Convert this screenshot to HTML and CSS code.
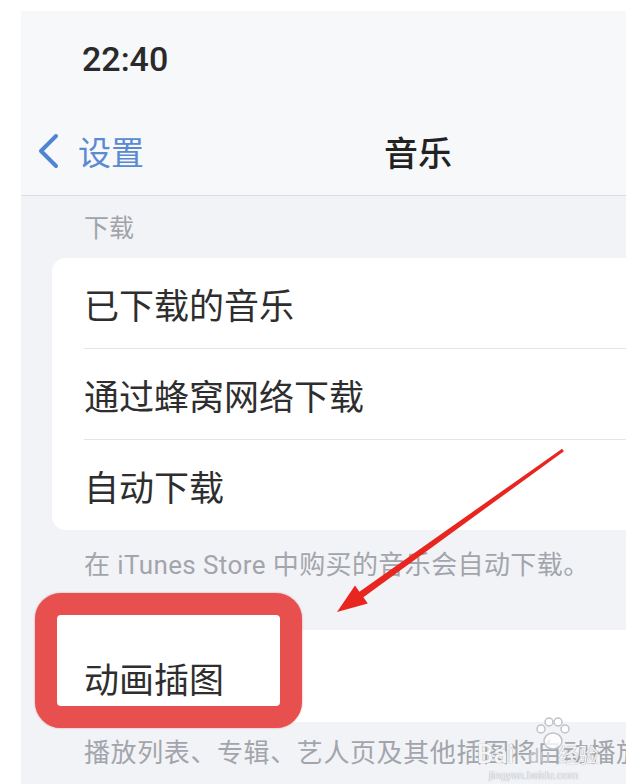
FILE: index.html
```html
<!DOCTYPE html>
<html lang="zh-CN">
<head>
    <meta charset="UTF-8">
    <meta name="viewport" content="width=device-width, initial-scale=1.0">
    <title>音乐</title>
    <link rel="stylesheet" href="styles.css">
</head>
<body>
    <div class="screen">

        <div class="status">
            <span class="time">22:40</span>
        </div>

        <div class="navbar">
            <div class="back">
                <svg class="chevron" width="24" height="36" viewBox="0 0 24 36">
                    <path d="M20 3 L5 18 L20 33" fill="none" stroke="#4f83d3" stroke-width="4" stroke-linecap="round" stroke-linejoin="round"/>
                </svg>
                <span class="back-text">设置</span>
            </div>
            <div class="title">音乐</div>
        </div>

        <div class="group">
            <div class="group-header">下载</div>
            <div class="card">
                <div class="row"><div class="row-inner">已下载的音乐</div></div>
                <div class="row"><div class="row-inner">通过蜂窝网络下载</div></div>
                <div class="row"><div class="row-inner">自动下载</div></div>
            </div>
            <div class="group-footer">在 iTunes Store 中购买的音乐会自动下载。</div>
        </div>

        <div class="group">
            <div class="card">
                <div class="row row-tall"><div class="row-inner"><span class="label">动画插图</span></div></div>
            </div>
            <div class="group-footer footer-last">播放列表、专辑、艺人页及其他插图将自动播放。</div>
        </div>

        <!-- annotations -->
        <div class="highlight"></div>

        <svg class="arrow" width="794" height="773" viewBox="0 0 794 773">
            <polygon points="542.9,440.2 342.4,586.3 346.8,592.4 316,601 334.0,574.6 338.4,580.7 541.1,437.8" fill="#e8261f"/>
        </svg>

        <div class="watermark">
            <svg class="paw" width="44" height="34" viewBox="0 0 44 34">
                <circle cx="10" cy="12" r="4" fill="rgba(255,255,255,0.8)" stroke="#bfc2c8" stroke-width="1.5"/>
                <circle cx="18" cy="5" r="4" fill="rgba(255,255,255,0.8)" stroke="#bfc2c8" stroke-width="1.5"/>
                <circle cx="27" cy="5" r="4" fill="rgba(255,255,255,0.8)" stroke="#bfc2c8" stroke-width="1.5"/>
                <circle cx="34" cy="12" r="4" fill="rgba(255,255,255,0.8)" stroke="#bfc2c8" stroke-width="1.5"/>
                <ellipse cx="22" cy="24" rx="9" ry="8" fill="rgba(255,255,255,0.8)" stroke="#bfc2c8" stroke-width="1.5"/>
            </svg>
            <div class="wm-line"><span class="wm-bai">Bai</span><span class="wm-du">du</span><span class="wm-cn">经验</span></div>
            <div class="wm-url">jingyan.baidu.com</div>
        </div>

    </div>
</body>
</html>
```

FILE: styles.css
```css
*{
    box-sizing: border-box;
    margin: 0;
    padding: 0;
}

html, body{
    overflow: hidden;
}

body{
    background-color: #ffffff;
    font-family: "Roboto", "Noto Sans CJK SC", sans-serif;
}

.screen{
    width: 794px;
    height: 773px;
    margin-top: 11px;
    margin-left: 21px;
    background-color: #f2f3f7;
    position: relative;
    overflow: hidden;
}

/* top bars */

.status{
    height: 96px;
    display: flex;
    align-items: center;
    padding-left: 61px;
    background-color: #f7f8fa;
}

.time{
    font-size: 34px;
    font-weight: 500;
    color: #2a2a2a;
}

.navbar{
    height: 89px;
    display: flex;
    align-items: center;
    justify-content: center;
    background-color: #f7f8fa;
    border-bottom: 1px solid #dcdde1;
    position: relative;
}

.back{
    position: absolute;
    left: 15px;
    top: 0;
    height: 88px;
    display: flex;
    align-items: center;
    gap: 18px;
}

.back-text{
    font-size: 33px;
    color: #5b8ad2;
}

.title{
    font-size: 34px;
    font-weight: 500;
    color: #222222;
}

/* grouped list */

.group-header{
    padding: 20px 0 16px 63px;
    font-size: 25px;
    line-height: 26px;
    color: #a0a3a9;
}

.card{
    margin: 0 31px;
    background-color: #ffffff;
    border-radius: 14px;
}

.row{
    height: 91px;
    padding-left: 32px;
    display: flex;
}

.row:last-child{
    height: 90px;
}

.row-inner{
    flex: 1;
    display: flex;
    align-items: center;
    font-size: 35px;
    color: #2e2e2e;
    border-bottom: 1px solid #e4e5e8;
}

.row:last-child .row-inner{
    border-bottom: none;
}

.row.row-tall{
    height: 92px;
}

.row-tall .row-inner{
    padding-top: 2px;
}

.label{
    position: relative;
    z-index: 2;
}

.group-footer{
    padding: 22px 0 52px 63px;
    font-size: 26px;
    line-height: 26px;
    letter-spacing: 0.4px;
    color: #a2a5ab;
    white-space: nowrap;
}

.footer-last{
    padding-top: 18px;
    letter-spacing: 0.6px;
}

/* red annotation box + arrow */

.highlight{
    position: absolute;
    left: 14px;
    top: 582px;
    width: 267px;
    height: 135px;
    border: 22px solid #e8504f;
    border-radius: 26px;
    background-color: #ffffff;
    box-shadow: 0 0 2px rgba(180, 40, 40, 0.5);
    z-index: 1;
}

.arrow{
    position: absolute;
    left: 0;
    top: 0;
    z-index: 3;
}

/* baidu watermark */

.watermark{
    position: absolute;
    left: 456px;
    top: 706px;
    width: 150px;
    z-index: 4;
    color: rgba(255, 255, 255, 0.9);
    text-shadow: 0 0 1px #a9acb2, 0 0 1px #a9acb2;
}

.paw{
    position: absolute;
    left: 54px;
    top: 0;
}

.wm-line{
    position: absolute;
    left: 0;
    top: 22px;
    display: flex;
    align-items: baseline;
    white-space: nowrap;
}

.wm-bai{
    font-size: 26px;
    font-weight: 500;
}

.wm-du{
    font-size: 20px;
    margin-left: 14px;
    color: #bfc2c8;
    text-shadow: none;
}

.wm-cn{
    font-size: 20px;
    margin-left: 8px;
}

.wm-url{
    position: absolute;
    left: 12px;
    top: 52px;
    font-size: 11px;
    white-space: nowrap;
    color: rgba(255, 255, 255, 0.9);
}
```
